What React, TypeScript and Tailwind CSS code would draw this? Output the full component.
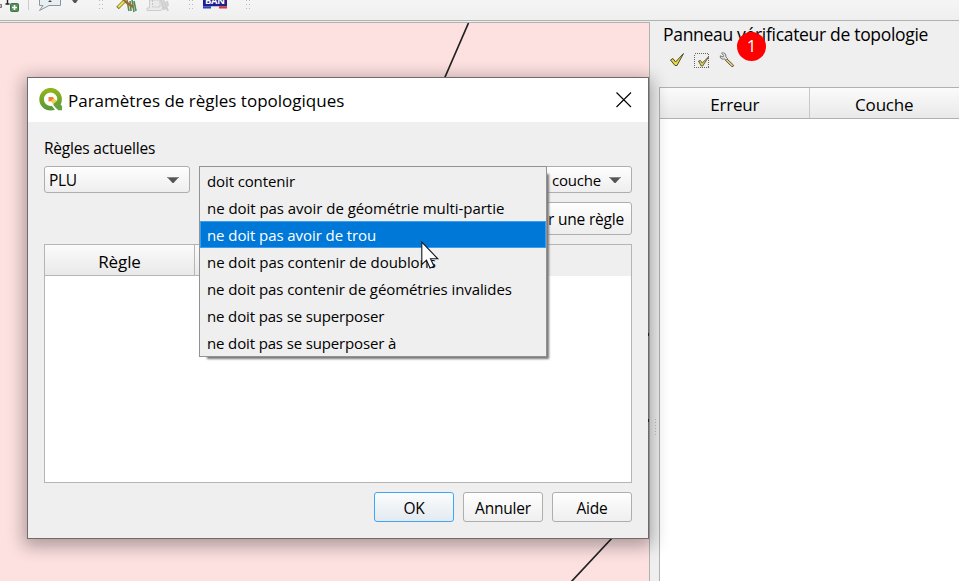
import React from "react";

const rules = [
  { label: "doit contenir", tracking: "tracking-[-0.12px]" },
  { label: "ne doit pas avoir de géométrie multi-partie", tracking: "tracking-[-0.04px]" },
  { label: "ne doit pas avoir de trou", tracking: "tracking-[-0.08px]" },
  { label: "ne doit pas contenir de doublons", tracking: "tracking-[-0.06px]" },
  { label: "ne doit pas contenir de géométries invalides", tracking: "tracking-[-0.09px]" },
  { label: "ne doit pas se superposer", tracking: "tracking-[-0.14px]" },
  { label: "ne doit pas se superposer à", tracking: "tracking-[-0.14px]" },
];

function Arrow() {
  return (
    <svg width="12" height="6" viewBox="0 0 12 6" className="shrink-0">
      <path d="M0 0H12L6.5 6H5.5Z" fill="#555" />
      <path d="M0 .5H12" stroke="#888" />
    </svg>
  );
}

function CheckIcon({ boxed }: { boxed?: boolean }) {
  return (
    <svg width="16" height="16" viewBox="0 0 16 16">
      {boxed ? (
        <>
          <path d="M.5 1.5H14.500V15.500H.5Z" fill="none" stroke="#666" strokeDasharray="1 1" shapeRendering="crispEdges" />
          <path d="M4.500 9L6.500 8.500L8.200 11L14.500 5L8.700 14H7.200Z" fill="#e0cf48" stroke="#555535" strokeWidth=".9" />
        </>
      ) : (
        <path d="M1.5 8L4 6.5L6.5 10L14.5 1.5L8 13.500H6Z" fill="#ead83c" stroke="#4c4a30" strokeWidth="1" />
      )}
    </svg>
  );
}

function WrenchIcon() {
  return (
    <svg width="16" height="16" viewBox="0 0 16 16">
      <path d="M7.5 6.5L13.8 12.4Q15.3 14 14 14.5Q12.8 15 11.6 13.5L6 7.8Z" fill="#e8d08a" stroke="#5b5033" strokeWidth="1" />
      <path d="M2.5 1.3L4.8 3.5L4 5L1.2 3.8Q.7 6.4 3.2 7.1Q4.5 7.3 5.4 6.9L7 8.3L8.6 6.6L7 5Q7.4 1.2 4.5.8Q3.3.7 2.5 1.3Z" fill="#e4e4e4" stroke="#6c6c6c" strokeWidth=".9" />
    </svg>
  );
}

function Logo() {
  return (
    <svg width="24" height="24" viewBox="0 0 24 24">
      <defs>
        <linearGradient id="q" x2="0" y2="1">
          <stop stopColor="#8fb31c" />
          <stop offset="1" stopColor="#5a9a36" />
        </linearGradient>
      </defs>
      <circle cx="11.6" cy="11.2" r="9" fill="none" stroke="url(#q)" strokeWidth="4.600" />
      <path d="M13 15.500L17.500 20.500L20 22.800L16.500 22.500L12.500 17.500Z" fill="#fff" />
      <path d="M13.800 15.800L17.300 12.500L23 18V22.300H19.200Z" fill="#65a13d" />
      <path d="M11.500 13L14.500 10L17.800 13L14.300 16.300Z" fill="#f0cf4e" />
      <path d="M9.500 9H14L14.800 10.200L11.700 13.300L9.500 13.500Z" fill="#ee7f35" />
    </svg>
  );
}

function Toolbar() {
  return (
    <div className="flex h-[21px] shrink-0 overflow-hidden border-b border-[#b1b1b1] bg-linear-to-b from-[#f5f5f5] to-[#efefef]">
      <svg width="260" height="14" viewBox="0 0 260 14" className="shrink-0">
        <path d="M7.500 0V4M5.500 4H9.500" stroke="#222" strokeWidth="1.400" />
        <path d="M0 4.500H1.500V7.500H0" fill="#bbb" stroke="#777" />
        <rect x="10.5" y="3.5" width="8" height="8" rx="1" fill="#55905a" stroke="#3b7545" />
        <path d="M12 7.5H17M14.5 5V10" stroke="#fff" strokeWidth="1.6" />
        <path d="M28.5 0V10" stroke="#ccc" />
        <path d="M39.5 0V5.5H43L39.5 10.5L49 5.5H60.5V0" fill="#e7eff3" stroke="#8b969b" />
        <path d="M50 0V2M48.500 1.500H51.500" stroke="#444" />
        <path d="M72 0H78L75.8 3H74.2Z" fill="#555" />
        <path d="M99.5 0V9M102.500 0V9" stroke="#bbb" strokeDasharray="1 3" />
        <path d="M127 0L129 11M130 1L131 11M132 0L134 12M134 1L136 11" stroke="#568d55" strokeWidth="1.600" />
        <path d="M123 0L133 7" stroke="#a4672f" strokeWidth="2.500" />
        <path d="M117.500 8L124 1.500" stroke="#777634" strokeWidth="3.5" />
        <path d="M118.200 7.300L124 1.500" stroke="#f2e849" strokeWidth="2" />
        <path d="M149.500 0V8H147V10.500H161L164 6V0Z" fill="#eaeaea" stroke="#cdcdcd" />
        <path d="M152.500 0V7H160V0" fill="none" stroke="#c4c4c4" strokeDasharray="2 1" />
        <path d="M161 0L164 10M164 1L168 11M162 5L166 9M167 1L168 6" stroke="#cdd0cd" strokeWidth="2" />
        <path d="M189.500 0V9M192.500 0V9" stroke="#bbb" strokeDasharray="1 3" />
        <rect x="203" y="0" width="24" height="6.500" fill="#20208d" />
        <path d="M203 7.500H211" stroke="#2646c0" strokeWidth="2" />
        <path d="M211 7.500H219" stroke="#eee" strokeWidth="2" />
        <path d="M219 7.500H227" stroke="#e03339" strokeWidth="2" />
        <text x="205" y="4" fill="#fff" fontFamily="Open Sans, sans-serif" fontSize="9.500" fontWeight="700" textLength="20">BAN</text>
        <path d="M246.500 0V9M249.500 0V9" stroke="#bbb" strokeDasharray="1 3" />
      </svg>
    </div>
  );
}

function Button({ label, primary }: { label: string; primary?: boolean }) {
  return (
    <button
      className={
        "flex h-[30px] w-20 items-center justify-center rounded-[3px] border pt-1 text-[15.5px] tracking-[-0.2px] " +
        (primary ? "border-[#3ca7f8] bg-linear-to-b from-[#fbfcfd] to-[#e4eaef]" : "border-[#aeaeae] bg-linear-to-b from-[#fefefe] to-[#efefef]")
      }
    >
      {label}
    </button>
  );
}

function TopologyPanel() {
  return (
    <aside className="flex w-[309px] shrink-0 flex-col bg-[#efefef]">
      <div className="relative ml-[13px] flex h-[25px] items-center whitespace-nowrap text-[17.5px] leading-6 tracking-[-0.31px]">
        Panneau vérificateur de topologie
        <span className="absolute left-[74px] top-[11px] flex size-[29px] items-center justify-center rounded-full bg-[#fe0000] pb-px text-[17px] font-medium tracking-normal text-white">1</span>
      </div>
      <div className="ml-[19px] mt-1.5 flex gap-[9px]">
        <CheckIcon />
        <CheckIcon boxed />
        <WrenchIcon />
      </div>
      <div className="ml-[9px] mt-[19px] flex flex-1 flex-col border-l border-t border-[#b1b1b1] bg-white">
        <div className="flex h-[31px] border-b border-[#b1b1b1] bg-linear-to-b from-[#fbfbfb] to-[#e9e9e9] text-[17px] tracking-[-0.2px]">
          <div className="flex w-[150px] items-center justify-center border-r border-[#c8c8c8] pl-px pt-1">Erreur</div>
          <div className="flex w-[150px] items-center justify-center pt-1">Couche</div>
        </div>
      </div>
    </aside>
  );
}

function RulesMenu() {
  return (
    <ul className="absolute left-[171px] top-[88px] h-[191px] w-[348px] border border-[#929292] bg-[#efefef] shadow-[5px_5px_2px_-3px_#777]">
      {rules.map((rule, i) => (
        <li
          key={rule.label}
          className={
            "flex h-[27px] items-center whitespace-nowrap pl-[7px] text-[15px] leading-5 " + rule.tracking +
            (i === 2 ? " bg-[#0078d7] text-white shadow-[inset_0_0_0_1px_#3a9df0]" : "")
          }
        >
          {rule.label}
        </li>
      ))}
    </ul>
  );
}

function RulesDialog() {
  return (
    <section className="absolute left-[27px] top-[77px] flex h-[462px] w-[622px] flex-col border border-[#736969] bg-[#efefef] shadow-[0_4px_16px_3px_rgba(0,0,0,0.32)]">
      <header className="flex h-11 items-center bg-white pl-[11px] pr-4">
        <Logo />
        <h1 className="ml-[5px] mt-0.5 flex-1 whitespace-nowrap text-[17px] tracking-normal">Paramètres de règles topologiques</h1>
        <svg width="16" height="16"><path d="M.5.5L15 15M15 .5L.5 15" stroke="#000" strokeWidth="1.1" /></svg>
      </header>
      <div className="flex flex-1 flex-col px-4">
        <p className="mt-[15px] h-[29px] text-[15.5px] leading-[22px] tracking-[-0.2px]">Règles actuelles</p>
        <div className="flex justify-between">
          <div className="flex h-[27px] w-[146px] items-center justify-between rounded-[3px] border border-[#aeaeae] bg-linear-to-b from-[#fefefe] to-[#eee] pl-1 pr-2.5 text-[15.5px] tracking-[-0.3px]">
            <span className="pt-[3px]">PLU</span><Arrow />
          </div>
          <div className="flex h-[27px] w-[110px] items-center justify-end gap-2 rounded-[3px] border border-[#aeaeae] bg-linear-to-b from-[#fefefe] to-[#eee] pr-2.5 text-[15px] tracking-[-0.2px]">
            <span className="pt-px">couche</span><Arrow />
          </div>
        </div>
        <div className="mt-[9px] flex justify-end">
          <div className="flex h-[33px] w-[145px] items-center justify-end whitespace-nowrap rounded-[3px] border border-[#aeaeae] bg-linear-to-b from-[#fefefe] to-[#eee] pr-[7px] pt-0.5 text-[15.5px] tracking-[-0.2px]">Ajouter une règle</div>
        </div>
        <div className="mt-[9px] h-[239px] border border-[#b5b5b5] bg-white">
          <div className="flex h-[31px] bg-[#efefef] text-[17px] tracking-[-0.1px]">
            <div className="flex w-[150px] items-center justify-center border-b border-r border-[#b5b5b5] bg-linear-to-b from-[#fbfbfb] to-[#e9e9e9] pt-1">Règle</div>
            <div className="w-[150px] border-b border-[#b5b5b5] bg-linear-to-b from-[#fbfbfb] to-[#e9e9e9]" />
          </div>
        </div>
        <footer className="mt-[9px] flex justify-end gap-[9px]">
          <Button label="OK" primary />
          <Button label="Annuler" />
          <Button label="Aide" />
        </footer>
      </div>
      <RulesMenu />
      <svg width="22" height="30" viewBox="0 0 22 30" className="absolute left-[393px] top-[163px]">
        <path d="M.8 1V23.500L5.500 19.200L9 27L13 25.300L9.500 17.800H16.800Z" fill="#fff" stroke="#111827" strokeWidth="1.1" />
      </svg>
    </section>
  );
}

export default function App() {
  return (
    <div className="relative flex h-[581px] w-[959px] flex-col overflow-hidden bg-[#efefef] font-['Open_Sans',sans-serif] text-black">
      <Toolbar />
      <main className="flex flex-1">
        <div className="mt-px w-[650px] border-r border-t border-[#b1b1b1] bg-[#fde0e0]">
          <svg width="649" height="558" viewBox="0 23 649 558">
            <path d="M468.500 23L442 84M613 537L571 582" stroke="#222" strokeWidth="1.7" />
          </svg>
        </div>
        <TopologyPanel />
      </main>
      <RulesDialog />
      <svg width="10" height="105" className="absolute left-[648px] top-[332px]">
        <path d="M.5 1V4M.5 87V90" stroke="#222" />
        <path d="M7.500 87V104" stroke="#aaa" strokeDasharray="1 2" />
      </svg>
    </div>
  );
}
